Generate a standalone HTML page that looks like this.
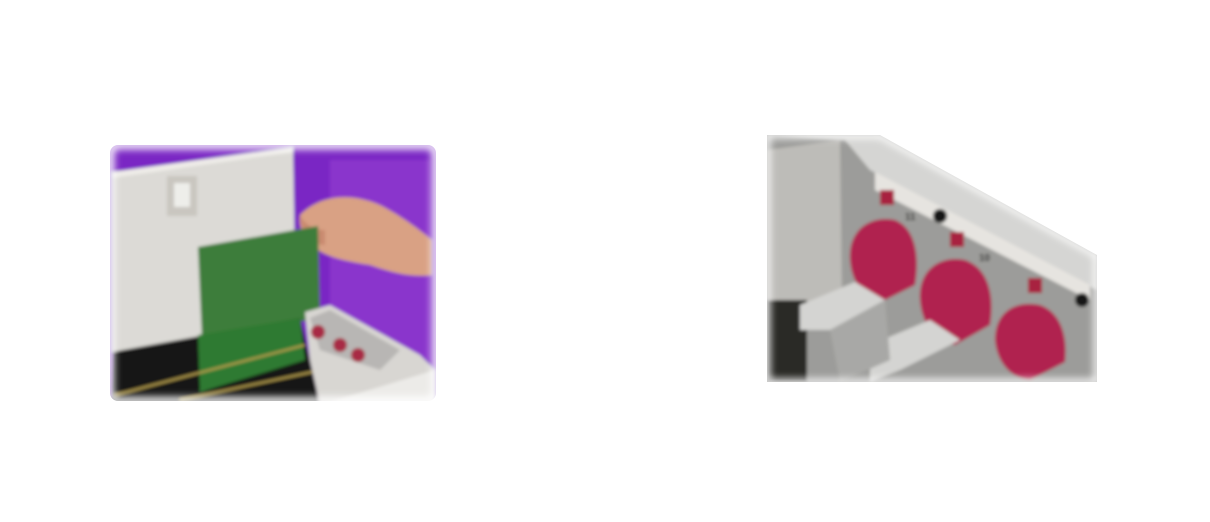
<!DOCTYPE html>
<html><head><style>
html,body{margin:0;padding:0;background:#fff;width:1210px;height:522px;overflow:hidden}
svg{position:absolute;left:0;top:0}
</style></head><body>
<svg width="1210" height="522" viewBox="0 0 1210 522">
<defs>
<filter id="b" x="-10%" y="-10%" width="120%" height="120%"><feGaussianBlur stdDeviation="1.6"/></filter>
<filter id="e" x="-10%" y="-10%" width="120%" height="120%"><feGaussianBlur stdDeviation="4"/></filter>
<clipPath id="c1"><rect x="110" y="145" width="326" height="256" rx="8"/></clipPath>
<clipPath id="c2"><polygon points="767,135 880,135 1097,255 1097,382 767,382"/></clipPath>
</defs>
<g clip-path="url(#c1)" filter="url(#b)">
<rect x="100" y="140" width="340" height="265" fill="#7a28c4"/>
<rect x="330" y="160" width="100" height="200" fill="#8a34cc"/>
<polygon points="112,172 293,147 296,330 112,352" fill="#dcdad6"/>
<polygon points="112,172 293,147 293,152 112,178" fill="#eeece8"/>
<rect x="167" y="176" width="30" height="40" fill="#c9c6c0"/>
<rect x="174" y="183" width="16" height="24" fill="#eeeeea"/>
<path d="M300,215 C320,195 350,192 380,205 C400,215 420,230 432,240 L432,275 C410,278 390,272 370,265 C350,262 330,258 318,250 C305,240 298,228 300,215Z" fill="#d9a184"/>
<path d="M300,215 C305,225 315,230 325,230 L325,245 C310,245 300,230 300,215Z" fill="#c98a70"/>
<polygon points="198,247 318,226 320,318 202,339" fill="#3d7d3a"/>
<polygon points="112,352 300,318 310,360 320,405 110,405" fill="#161812"/>
<polygon points="198,335 300,318 305,360 200,392" fill="#2f7a30"/>
<line x1="115" y1="395" x2="305" y2="345" stroke="#b8a050" stroke-width="2"/>
<line x1="180" y1="400" x2="345" y2="365" stroke="#b8a050" stroke-width="2"/>
<polygon points="305,312 330,305 420,355 435,370 435,405 320,405 310,360" fill="#d8d6d2"/>
<polygon points="310,318 330,310 400,350 380,370 320,350" fill="#b8b6b4"/>
<circle cx="318" cy="332" r="7" fill="#a82a45"/>
<circle cx="340" cy="345" r="7" fill="#a82a45"/>
<circle cx="358" cy="355" r="7" fill="#a82a45"/>
<polygon points="320,405 435,370 435,405" fill="#ecebe8"/>
</g>
<rect x="110" y="145" width="326" height="256" rx="8" fill="none" stroke="#fff" stroke-width="8" filter="url(#e)"/>
<g clip-path="url(#c2)" filter="url(#b)">
<rect x="760" y="130" width="345" height="260" fill="#9c9c9a"/>
<polygon points="767,150 840,140 842,300 767,310" fill="#bdbcb8"/>
<polygon points="767,135 880,135 1097,255 1097,290 870,170 845,140" fill="#d5d5d3"/>
<polygon points="875,172 1090,285 1090,300 875,190" fill="#e6e4e0"/>
<rect x="767" y="300" width="40" height="82" fill="#2a2a28"/>
<path d="M850,260 C848,230 870,215 895,220 C915,228 920,255 915,285 L885,300 C865,298 852,285 850,260Z" fill="#b0234f"/>
<path d="M920,300 C918,270 940,255 965,260 C988,268 995,295 990,325 L955,345 C935,340 922,325 920,300Z" fill="#b0234f"/>
<path d="M995,340 C995,312 1015,300 1040,305 C1060,312 1068,335 1065,362 L1030,380 C1010,378 997,362 995,340Z" fill="#b0234f"/>
<rect x="880" y="190" width="14" height="15" fill="#a8203f"/>
<rect x="950" y="232" width="14" height="15" fill="#a8203f"/>
<rect x="1028" y="278" width="14" height="15" fill="#a8203f"/>
<circle cx="940" cy="216" r="7" fill="#151515"/>
<circle cx="1082" cy="300" r="7" fill="#151515"/>
<polygon points="800,305 855,282 885,300 830,330 800,330" fill="#d4d4d2"/>
<polygon points="870,345 930,320 960,340 900,370 870,382" fill="#d4d4d2"/>
<polygon points="830,330 885,300 890,360 840,382" fill="#a8a8a6"/>
<text x="905" y="220" font-family="Liberation Sans,sans-serif" font-size="10" font-weight="bold" fill="#222">11</text>
<text x="979" y="261" font-family="Liberation Sans,sans-serif" font-size="10" font-weight="bold" fill="#222">10</text>
</g>
<polygon points="767,135 880,135 1097,255 1097,382 767,382" fill="none" stroke="#fff" stroke-width="6" filter="url(#e)"/>
</svg>
</body></html>
